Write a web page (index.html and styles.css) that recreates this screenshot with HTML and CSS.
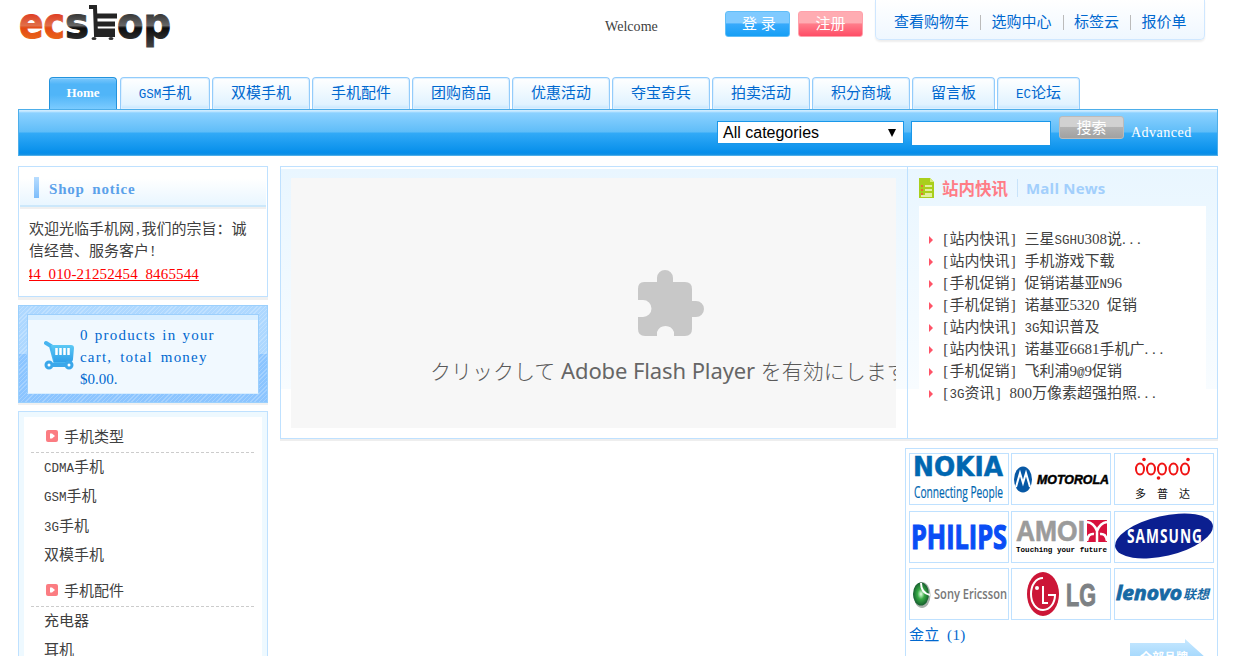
FILE: index.html
```
<!DOCTYPE html>
<html lang="zh-CN">
<head>
<meta charset="utf-8">
<title>ECSHOP</title>
<link rel="stylesheet" href="styles.css">
</head>
<body>
<div class="page">
  <header class="header">
    <svg class="logo" width="156" height="56" viewBox="0 0 156 56">
      <defs>
        <linearGradient id="fire" x1="0" y1="0" x2="0" y2="1"><stop offset=".3" stop-color="#df3a20"/><stop offset=".55" stop-color="#e0704a"/><stop offset=".6" stop-color="#e34812"/><stop offset="1" stop-color="#ee7b20"/></linearGradient>
        <linearGradient id="coal" x1="0" y1="0" x2="0" y2="1"><stop offset=".3" stop-color="#333"/><stop offset=".55" stop-color="#666"/><stop offset=".6" stop-color="#0c0c0c"/><stop offset="1" stop-color="#444"/></linearGradient>
      </defs>
      <g class="wordmark">
        <text x="1" y="38" fill="url(#fire)" stroke="url(#fire)" textLength="46" lengthAdjust="spacingAndGlyphs">ec</text>
        <text x="47" y="38" fill="url(#coal)" stroke="url(#coal)" textLength="24" lengthAdjust="spacingAndGlyphs">s</text>
        <text x="99" y="38" fill="url(#coal)" stroke="url(#coal)" textLength="54" lengthAdjust="spacingAndGlyphs">op</text>
      </g>
      <g fill="none" stroke="#242424">
        <path d="M71 7h6l1 28h19" stroke-width="4"/>
        <path d="M77 16h22M78 24h19M79 31h18" stroke-width="5"/>
      </g>
      <ellipse cx="76" cy="38.500" rx="2.500" ry="1.500" fill="#333"/><ellipse cx="93" cy="38.500" rx="2.500" ry="1.500" fill="#333"/>
    </svg>
    <span class="welcome">Welcome</span>
    <span class="btn btn-login">登 录</span>
    <span class="btn btn-reg">注册</span>
    <nav class="quick"><a>查看购物车</a><i></i><a>选购中心</a><i></i><a>标签云</a><i></i><a>报价单</a></nav>
  </header>
  <nav class="tabs">
    <a class="tab home">Home</a><a class="tab gsm"><span class="caps">GSM</span>手机</a><a class="tab">双模手机</a><a class="tab">手机配件</a><a class="tab">团购商品</a><a class="tab">优惠活动</a><a class="tab">夺宝奇兵</a><a class="tab">拍卖活动</a><a class="tab">积分商城</a><a class="tab short">留言板</a><a class="tab short"><span class="caps">EC</span>论坛</a>
  </nav>
  <div class="bar">
    <div class="select"><span>All categories</span><svg width="8" height="8"><path d="M0 0h8L4 8z"/></svg></div>
    <div class="field"></div>
    <span class="btn btn-search">搜索</span>
    <a class="adv">Advanced</a>
  </div>
  <main class="main">
    <aside class="left">
      <section class="notice">
        <h2><i></i>Shop notice</h2>
        <p>欢迎光临手机网<span class="half">,</span>我们的宗旨：诚</p>
        <p>信经营、服务客户<span class="half">!</span></p>
        <div class="ticker"><u>44&ensp;010-21252454&ensp;8465544</u></div>
      </section>
      <section class="cart">
        <div class="cart-in">
          <svg width="30" height="31" viewBox="0 0 30 31">
            <defs><linearGradient id="cg" x1="0" y1="0" x2="0" y2="1"><stop offset="0" stop-color="#5cc9f5"/><stop offset="1" stop-color="#2e9fe8"/></linearGradient></defs>
            <path d="M2 3l5 3 4 15h15" fill="none" stroke="#48b5f0" stroke-width="4" stroke-linecap="round"/>
            <path d="M7 5h20q3 0 3 3l-1 11q0 3-3 3H10z" fill="url(#cg)"/>
            <path d="M12.500 8v7M16.500 8v7M20.500 8v7M24.500 8v7" stroke="#fff" stroke-width="2.500"/>
            <path d="M7 25h18" stroke="#3aa7ea" stroke-width="4"/>
            <g fill="#fff" stroke="#3aa7ea" stroke-width="3"><circle cx="5" cy="25" r="3"/><circle cx="25" cy="25" r="3"/></g>
          </svg>
          <div class="cart-text"><div class="l1">0 products in your</div><div class="l2">cart, total money</div><div>$0.00.</div></div>
        </div>
      </section>
      <section class="cats">
        <h3><svg width="12" height="12"><rect width="12" height="12" rx="2" fill="#fb7c82"/><path d="M4 3.500h2l3 2.500-3 2.500H4z" fill="#fff"/></svg>手机类型</h3>
        <ul><li><span class="caps">CDMA</span>手机</li><li><span class="caps">GSM</span>手机</li><li><span class="caps">3G</span>手机</li><li>双模手机</li></ul>
        <h3><svg width="12" height="12"><rect width="12" height="12" rx="2" fill="#fb7c82"/><path d="M4 3.500h2l3 2.500-3 2.500H4z" fill="#fff"/></svg>手机配件</h3>
        <ul><li>充电器</li><li>耳机</li></ul>
      </section>
    </aside>
    <div class="right">
      <section class="feature">
        <div class="flash-wrap"><div class="flash">
          <svg width="68" height="68" viewBox="0 0 68 68"><path fill="#c8c8c8" d="M7 13h13V9a8 8 0 0 1 16 0v4h12q7 0 7 7v12h4a8 8 0 0 1 0 16h-4v12q0 7-7 7H37v-4a9 9 0 0 0-17 0v4H8q-7 0-7-7V48h5a8.500 8.500 0 0 0 0-17H1V20q0-7 6-7z"/></svg>
          <div class="flash-text">クリックして <span>Adobe Flash Player</span> を有効にします</div>
        </div></div>
        <div class="news">
          <h2><svg width="15" height="20"><path d="M0 0h11l4 4v16H0z" fill="#a9cf1c"/><path d="M11 0v4h4" fill="#d7ec79"/><path d="M6 8h7M6 12h7M6 16h7M2 18h11" stroke="#f4fac9" stroke-width="1.500"/><path d="M3 7v10" stroke="#e56f32" stroke-width="2" stroke-dasharray="2 2"/></svg><b>站内快讯</b><em>Mall News</em></h2>
          <ul>
            <li><span class="half">[</span>站内快讯<span class="half">]</span><s></s>三星<span class="caps">SGHU</span>308说<span class="dots">...</span></li>
            <li><span class="half">[</span>站内快讯<span class="half">]</span><s></s>手机游戏下载</li>
            <li><span class="half">[</span>手机促销<span class="half">]</span><s></s>促销诺基亚<span class="caps">N</span>96</li>
            <li><span class="half">[</span>手机促销<span class="half">]</span><s></s>诺基亚5320<s></s>促销</li>
            <li><span class="half">[</span>站内快讯<span class="half">]</span><s></s><span class="caps">3G</span>知识普及</li>
            <li><span class="half">[</span>站内快讯<span class="half">]</span><s></s>诺基亚6681手机广<span class="dots">...</span></li>
            <li><span class="half">[</span>手机促销<span class="half">]</span><s></s>飞利浦9<span class="caps">@</span>9促销</li>
            <li><span class="half">[</span><span class="caps">3G</span>资讯<span class="half">]</span><s></s>800万像素超强拍照<span class="dots">...</span></li>
          </ul>
        </div>
      </section>
      <section class="brands">
        <div class="grid">
          <svg viewBox="0 0 98 50"><g fill="#0067b1"><text x="3" y="22" font-family="DejaVu Sans" font-weight="bold" font-size="26" stroke="#0067b1" stroke-width=".5" textLength="90" lengthAdjust="spacingAndGlyphs">NOKIA</text><text x="4" y="44" font-family="Open Sans" font-size="17" stroke="#0067b1" stroke-width=".2" textLength="89" lengthAdjust="spacingAndGlyphs">Connecting People</text></g></svg>
          <svg viewBox="0 0 98 50"><ellipse cx="11" cy="25.500" rx="9" ry="13" fill="#0758a5"/><path d="M4 33l4-14 3 10 3-10 4 14" fill="none" stroke="#fff" stroke-width="2"/><text x="25" y="30" font-family="Liberation Sans" font-weight="bold" font-style="italic" font-size="12.500" textLength="72" lengthAdjust="spacingAndGlyphs" stroke="#000" stroke-width=".5">MOTOROLA</text></svg>
          <svg viewBox="0 0 98 50"><g fill="none" stroke="#f01414" stroke-width="2"><ellipse cx="25" cy="15" rx="4" ry="5.500"/><ellipse cx="36" cy="15" rx="4" ry="5.500"/><ellipse cx="47" cy="15" rx="4" ry="5.500"/><ellipse cx="58.500" cy="15" rx="4" ry="5.500"/><ellipse cx="70" cy="15" rx="4" ry="5.500"/></g><g fill="#f01414"><circle cx="29" cy="5.500" r="1.800"/><circle cx="73" cy="5.500" r="1.800"/><circle cx="43.500" cy="24" r="1.800"/></g><g font-family="Noto Sans CJK SC" font-size="11" fill="#111"><text x="20" y="44">多</text><text x="42" y="44">普</text><text x="64" y="44">达</text></g></svg>
          <svg viewBox="0 0 98 50"><text x="1" y="37" fill="#0a4df5" stroke="#0a4df5" stroke-width="1.200" font-family="Open Sans" font-weight="bold" font-size="34" textLength="96" lengthAdjust="spacingAndGlyphs">PHILIPS</text></svg>
          <svg viewBox="0 0 98 50"><text x="4" y="29" fill="#9b9b9b" stroke="#9b9b9b" stroke-width=".6" font-family="Liberation Sans" font-weight="bold" font-size="29" textLength="69" lengthAdjust="spacingAndGlyphs">AMOI</text><rect x="75" y="8" width="20" height="22" fill="#d8113c"/><path d="M75 10q7 1 10 9 3-8 10-9M75 29q1-8 7-7M95 29q-1-8-7-7M85 19v11" fill="none" stroke="#fff" stroke-width="2.500"/><text x="4" y="40" font-family="Liberation Mono" font-weight="bold" font-size="8" textLength="91" lengthAdjust="spacingAndGlyphs">Touching your future</text></svg>
          <svg viewBox="0 0 98 50"><ellipse cx="49" cy="24" rx="50" ry="20" transform="rotate(-13 49 24)" fill="#0b1f90"/><text x="12" y="31" fill="#fff" font-family="Open Sans" font-weight="bold" font-size="20" letter-spacing="1.500" textLength="76" lengthAdjust="spacingAndGlyphs">SAMSUNG</text></svg>
          <svg viewBox="0 0 98 50"><defs><radialGradient id="sg"><stop stop-color="#e8ffe6"/><stop offset=".45" stop-color="#39ab45"/><stop offset="1" stop-color="#17602f"/></radialGradient></defs><ellipse cx="12" cy="26" rx="8.500" ry="13" fill="#a8b1ab"/><ellipse cx="11" cy="25" rx="8" ry="11.500" fill="url(#sg)"/><path d="M11 14q0 10 9 12" fill="none" stroke="#fff" stroke-width="2"/><text x="24" y="30" fill="#777" font-family="Open Sans" font-size="14" font-weight="600" textLength="73" lengthAdjust="spacingAndGlyphs">Sony Ericsson</text></svg>
          <svg viewBox="0 0 98 50"><ellipse cx="31" cy="25" rx="16" ry="22" fill="#cc1637"/><path d="M31 9c-7 0-12 7-12 16s5 16 12 16 12-7 12-15h-7M31 17v17h5" fill="none" stroke="#fff" stroke-width="2"/><circle cx="25" cy="19" r="2" fill="#fff"/><text x="54" y="37" fill="#7d8184" stroke="#7d8184" font-family="Liberation Sans" font-weight="bold" font-size="31" textLength="30" lengthAdjust="spacingAndGlyphs">LG</text></svg>
          <svg viewBox="0 0 98 50"><text x="1" y="31" fill="#1769a4" stroke="#1769a4" stroke-width=".8" font-family="Open Sans" font-weight="bold" font-style="italic" font-size="19" textLength="66" lengthAdjust="spacingAndGlyphs">lenovo</text><text x="68" y="30" fill="#1769a4" font-family="Noto Sans CJK SC" font-weight="bold" font-style="italic" font-size="13">联想</text></svg>
        </div>
        <a class="jin">金立<s></s>(1)</a>
        <svg class="all" width="76" height="40"><defs><linearGradient id="ag" x1="0" y1="0" x2="0" y2="1"><stop stop-color="#c7e8ff"/><stop offset="1" stop-color="#82c8fa"/></linearGradient></defs><path d="M0 4h55V0l21 19-21 19v-4H0z" fill="url(#ag)"/><text x="10" y="23" fill="#fff" font-family="Noto Sans CJK SC" font-weight="bold" font-size="12">全部品牌</text></svg>
      </section>
    </div>
  </main>
</div>
</body>
</html>
```
FILE: styles.css
```
* { box-sizing: border-box; }
html { overflow: hidden; }
body { margin: 0; height: 656px; overflow: hidden; background: #fff; color: #404040; font: 15px/22px "Liberation Serif", "Noto Sans CJK SC", serif; }
h2, h3, p, ul { margin: 0; padding: 0; font-weight: normal; font-size: 15px; }
ul { list-style: none; }
s { display: inline-block; width: 7.5px; }
.page { width: 1200px; height: 656px; margin-left: 18px; overflow: hidden; }
.header { height: 77px; display: flex; align-items: flex-start; }
.wordmark { font: bold 43px "DejaVu Sans", sans-serif; }
.welcome { margin: 16px 67px 0 431px; width: 53px; font-size: 14px; letter-spacing: .05px; white-space: nowrap; }
.btn { color: #fff; text-align: center; border-radius: 3px; height: 26px; width: 65px; line-height: 25px; flex: none; }
.btn-login { margin: 11px 8px 0 0; padding-left: 3px; border: 1px solid #60bdf7; background: linear-gradient(#7fcaff 45%, #37aafc 50%, #169ff5); }
.btn-reg { margin: 11px 12px 0 0; border: 1px solid #ffa1ab; background: linear-gradient(#ffacb2 45%, #ff7d8a 50%, #ff4d66); }
.quick { display: flex; align-items: center; width: 330px; height: 40px; padding: 5px 0 0 18px; color: #0068cf; border: 1px solid #cfe7ff; border-top: 0; border-radius: 0 0 5px 5px; background: linear-gradient(#fff, #eff7ff); box-shadow: 0 2px 2px #eee; white-space: nowrap; }
.quick i { width: 1px; height: 15px; background: #bbb; margin: 0 10.5px 0 11px; }
.tabs { display: flex; gap: 2px; height: 32px; padding-left: 31px; }
.tab { width: 98px; border: 1px solid #93ccfb; border-bottom: 0; border-radius: 4px 4px 0 0; box-shadow: inset 0 0 0 1px #ddf0ff; background: linear-gradient(#fff, #e1f3ff 85%, #c5e6ff); color: #0068cf; text-align: center; line-height: 30px; flex: none; white-space: nowrap; }
.home { width: 68px; margin-right: 1px; border-color: #2393dd; background: linear-gradient(#7dc8fc, #50b5f8 20%, #50b5f8 55%, #7bcbff); box-shadow: inset 0 1px #90d2ff; color: #fff; font-weight: bold; font-size: 13px; }
.gsm { width: 90px; }
.short { width: 83px; }
.caps { font-family: "Liberation Mono", monospace; font-size: 12.5px; line-height: 1; }
.bar { height: 47px; border: 1px solid #4daeea; display: flex; align-items: flex-start; background: linear-gradient(#cdebff 0 1px, #8bd1ff 3px, #5fbdf8 22px, #32aaf7 23px, #058eea 43px, #1b94e3); }
.select { width: 187px; height: 23px; margin: 11px 7px 0 698px; border: 1px solid #1997e9; background: #fff; display: flex; align-items: center; justify-content: space-between; padding: 0 7px 0 5px; color: #000; font: 16px "Liberation Sans", sans-serif; flex: none; }
.field { width: 140px; height: 25px; margin: 11px 8px 0 0; border: 1px solid #1997e9; background: #fff; }
.btn-search { height: 23px; margin-top: 6px; border: 1px solid #bbb; line-height: 22px; background: linear-gradient(#d1d1d1 45%, #b2b2b2 50%, #a1a1a1); }
.adv { margin: 12px 0 0 7px; color: #fff; font-size: 14px; letter-spacing: .5px; }
.main { display: flex; gap: 12px; padding-top: 10px; }
.left { width: 250px; flex: none; }
.notice { height: 131px; border: 1px solid #bfe1ff; box-shadow: 0 3px #f0f0f0; margin-bottom: 8px; }
.notice h2 { height: 40px; margin: 0 1px 11px; border-bottom: 2px solid #cce8fb; box-shadow: 0 2px #f0f0f0; background: linear-gradient(#fff 30%, #e9f6ff); display: flex; align-items: center; padding: 6px 0 0 14px; color: #5ba1ea; font-weight: bold; letter-spacing: .8px; word-spacing: 3px; }
.notice h2 i { width: 5px; height: 21px; margin: -4px 10px 0 0; background: linear-gradient(#b8ddff, #7dbdfb); }
.notice p { padding-left: 10px; white-space: nowrap; }
.half { display: inline-block; width: 7.5px; text-align: center; }
.ticker { margin: 1px 0 0 10px; width: 170px; height: 22px; display: flex; justify-content: flex-end; overflow: hidden; color: red; letter-spacing: .15px; }
.ticker u { white-space: nowrap; flex: none; }
.cart { height: 98px; margin-bottom: 8px; padding: 9px; border: 1px solid #9bd0fd; background: repeating-linear-gradient(135deg, #ffffff38 0 1px, transparent 1px 3px), linear-gradient(#aed8ff 50%, #8cc5ff 50%); box-shadow: 0 2px #f0f0f0; }
.cart-in { height: 80px; margin: -1px; border: 1px solid #9ccffc; border-bottom-color: #d8eeff; background: linear-gradient(#d8eeff 5px, #f1f9ff 5px); display: flex; padding: 9px 0 0 16px; }
.cart-in svg { margin: 16px 6px 0 0; flex: none; }
.cart-text { color: #0068cf; line-height: 22px; white-space: nowrap; }
.l1 { letter-spacing: 1.2px; word-spacing: 1.2px; }
.l2 { letter-spacing: 1.2px; word-spacing: 3px; }
.cats { height: 300px; border: 1px solid #bfe1ff; box-shadow: inset 0 0 0 5px #eef9ff; padding: 12px 13px 0 12px; }
.cats h3 { height: 29px; line-height: 27px; display: flex; gap: 6px; padding-left: 15px; border-bottom: 1px dashed #ccc; }
.cats h3 svg { margin-top: 6px; }
.cats ul { padding: 0 0 8px 13px; }
.cats li { height: 29.3px; line-height: 29px; }
.right { width: 938px; flex: none; }
.feature { height: 273px; display: flex; border: 1px solid #bfe1ff; box-shadow: 0 2px #eee; background: linear-gradient(#fff 0 2px, #e9f6ff 2px, #f8fcff 222px, #fff 222px); }
.flash-wrap { width: 627px; padding: 11px 0 0 10px; border-right: 1px solid #bfe1ff; }
.flash { width: 605px; height: 250px; background: #f7f7f7; overflow: hidden; }
.flash svg { display: block; margin: 91px 0 0 346px; }
.flash-text { margin: 17px 0 0 139px; font: 300 21px/32px "Noto Sans CJK JP", sans-serif; color: #5a5a5a; white-space: nowrap; }
.flash-text span { font: 22px "Noto Sans", sans-serif; letter-spacing: -.1px; margin: 0 1px; color: #666; }
.news { flex: 1; padding: 0 11px; }
.news h2 { height: 39px; display: flex; align-items: center; padding-top: 3px; }
.news h2 b { margin-left: 8px; padding-right: 9px; border-right: 1px solid #c8e3fa; color: #ff7c86; font: bold 16.5px/18px "Noto Sans CJK SC", sans-serif; }
.news h2 em { margin-left: 8px; font: bold 15px "Open Sans", "Noto Sans", sans-serif; letter-spacing: .2px; color: #a2cffc; }
.news ul { height: 222px; padding: 22px 0 0 10px; background: #fff; white-space: nowrap; }
.news li { height: 22px; }
.news li::before { content: ""; display: inline-block; border: 4px solid transparent; border-left-color: #ff5367; border-right: 0; margin-right: 9px; }
.dots { letter-spacing: 3.7px; }
.brands { position: relative; margin: 9px 0 0 625px; width: 313px; height: 260px; border: 1px solid #bfe1ff; padding: 4px 3px; }
.grid { display: grid; grid-template-columns: 100px 100px 100px; column-gap: 2.4px; row-gap: 5.5px; }
.grid svg { width: 100px; height: 52px; border: 1px solid #bfe1ff; }
.jin { display: block; margin-top: 4px; padding-left: 0; color: #0068cf; letter-spacing: .3px; }
.all { position: absolute; left: 224px; top: 190px; }
```
